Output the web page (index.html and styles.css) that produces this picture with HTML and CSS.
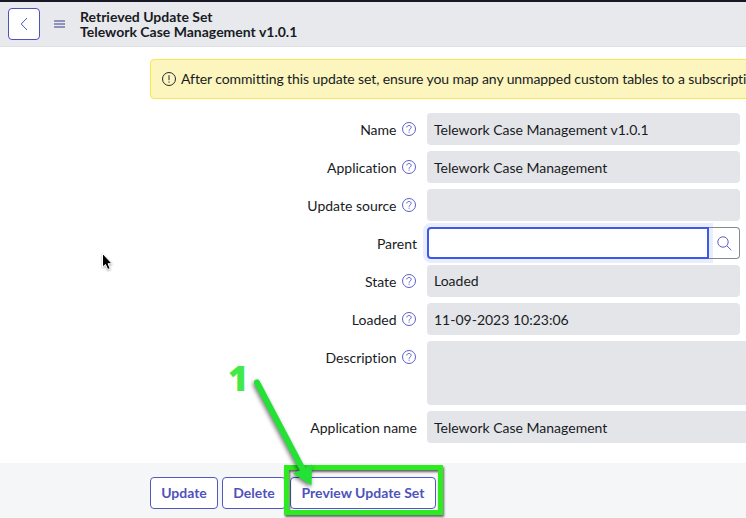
FILE: index.html
```html
<!DOCTYPE html>
<html lang="en">
<head>
<meta charset="utf-8">
<title>Retrieved Update Set</title>
<link rel="stylesheet" href="styles.css">
</head>
<body>
<svg class="defs" width="0" height="0" aria-hidden="true">
  <symbol id="help" viewBox="0 0 14 14"><circle cx="7" cy="7" r="6.5"/><path d="M4.8 5.4C4.9 4.2 5.8 3.5 7 3.5s2.2.8 2.2 1.9c0 1.6-2.1 1.6-2.1 3.3M7.1 9.7v1"/></symbol>
</svg>
<header class="header">
  <button class="back" aria-label="Back"><svg width="8" height="14" viewBox="0 0 8 14"><path d="M7 1 1.2 7 7 13"/></svg></button>
  <div class="menu"><i></i><i></i><i></i></div>
  <h1 class="title"><span class="title-type">Retrieved Update Set</span><span class="title-name">Telework Case Management v1.0.1</span></h1>
</header>
<main class="content">
  <div class="banner"><svg width="14" height="14" viewBox="0 0 14 14"><circle cx="7" cy="7" r="6.5"/><path d="M7 3.2v5M7 9.5v1.2"/></svg><span class="banner-text">After committing this update set, ensure you map any unmapped custom tables to a subscription.</span></div>
  <form class="form">
    <div class="row"><label><span>Name</span><svg class="help"><use href="#help"/></svg></label><div class="field"><span>Telework Case Management v1.0.1</span></div></div>
    <div class="row"><label><span>Application</span><svg class="help"><use href="#help"/></svg></label><div class="field"><span>Telework Case Management</span></div></div>
    <div class="row"><label><span>Update source</span><svg class="help"><use href="#help"/></svg></label><div class="field"></div></div>
    <div class="row"><label><span>Parent</span></label><div class="lookup"><div class="lookup-input"></div><div class="lookup-button"><svg width="15" height="15" viewBox="0 0 15 15"><circle cx="6" cy="6" r="5.2"/><path d="m9.8 9.8 4.5 4.4"/></svg></div></div></div>
    <div class="row"><label><span>State</span><svg class="help"><use href="#help"/></svg></label><div class="field select"><span>Loaded</span></div></div>
    <div class="row"><label><span>Loaded</span><svg class="help"><use href="#help"/></svg></label><div class="field"><span>11-09-2023 10:23:06</span></div></div>
    <div class="row tall"><label><span>Description</span><svg class="help"><use href="#help"/></svg></label><div class="field wide"></div></div>
    <div class="row"><label><span>Application name</span></label><div class="field wide"><span>Telework Case Management</span></div></div>
  </form>
</main>
<footer class="footer">
  <button class="btn update"><span>Update</span></button><button class="btn delete"><span>Delete</span></button><button class="btn preview"><span>Preview Update Set</span></button>
</footer>
<svg class="cursor" width="16" height="22" viewBox="0 0 16 22"><path class="pointer" d="M2.5 1.5v13.6l3-2.6 2.2 5 2.5-1-2.1-4.8h4z"/></svg>
<div class="highlight"></div>
<span class="step">1</span>
<svg class="arrow" width="80" height="120" viewBox="240 372 80 120"><path class="shaft" d="M257 382.500 302 468"/><path class="head" d="M293 473.500 312 464.500 311.500 485.500z"/></svg>
</body>
</html>
```
FILE: styles.css
```css
* { box-sizing: border-box; }
body {
  margin: 0;
  width: 746px;
  height: 518px;
  position: relative;
  overflow: hidden;
  display: flex;
  flex-direction: column;
  background: #fff;
  color: #181b24;
  font: 14px/20px Lato, sans-serif;
  font-variant-ligatures: none;
}
svg { fill: none; flex: none; display: block; }
.defs { position: absolute; }
.header {
  height: 47px;
  flex: none;
  display: flex;
  align-items: center;
  padding-left: 8px;
  border-top: 2px solid #181725;
  border-bottom: 1px solid #e0e1e5;
  background: #e8e9ed;
}
.back {
  width: 32px;
  height: 32px;
  padding: 0;
  display: grid;
  place-items: center;
  border: 1px solid #4f52bd;
  border-radius: 4px;
  background: #fff;
  stroke: #4f52bd;
}
.menu { width: 11px; margin: 0 15px 0 14px; display: grid; gap: 1px; }
.menu i { height: 2px; background: #9092bd; }
.title { margin: 0; font-size: 14px; line-height: 15px; font-weight: 700; white-space: nowrap; }
.title span { display: block; width: max-content; }
.content { height: 416px; flex: none; padding: 12px 0 0 150px; }
.banner {
  width: 610px;
  height: 40px;
  display: flex;
  align-items: center;
  gap: 5px;
  padding-left: 11px;
  border: 1px solid #f5e850;
  border-radius: 4px;
  background: #fcf5bd;
  white-space: nowrap;
  stroke: #252831;
}
.banner-text { stroke: none; letter-spacing: -0.1px; }
.form { margin-top: 14px; display: grid; gap: 6px; }
.row { display: grid; grid-template: 100% / 267px 1fr; column-gap: 10px; height: 32px; }
.row.tall { height: 64px; }
label { height: 34px; display: flex; align-items: center; justify-content: flex-end; gap: 5.5px; white-space: nowrap; }
.help { width: 14px; height: 14px; margin: -2px 1px 0 0; stroke: #5b5fc7; }
.field {
  width: 313px;
  display: flex;
  align-items: center;
  padding: 2px 0 0 7px;
  border-radius: 4px;
  background: #e4e5e9;
  white-space: nowrap;
}
.field.select { padding-top: 0; }
.field.wide { width: 340px; }
.lookup { width: 313px; height: 32px; display: flex; }
.lookup-input {
  width: 282px;
  border: 2px solid #3c59e7;
  border-radius: 4px 0 0 4px;
  background: #fff;
  box-shadow: 0 0 0 4px #e9edfd;
}
.lookup-button {
  width: 31px;
  display: grid;
  place-items: center;
  border: 1px solid #858995;
  border-left: 0;
  border-radius: 0 4px 4px 0;
  stroke: #5b5fc7;
}
.footer {
  flex: 1;
  display: flex;
  gap: 4px;
  padding: 14px 0 0 150px;
  background: #f5f6f8;
}
.btn {
  height: 32px;
  padding: 0;
  border: 1px solid #5457bb;
  border-radius: 4px;
  background: #fff;
  color: #4f52bd;
  font: 700 14px/20px Lato, sans-serif;
  white-space: nowrap;
}
.update { width: 68px; }
.delete { width: 64px; }
.preview { width: 146px; }
.cursor { position: absolute; left: 100px; top: 252px; filter: drop-shadow(0 1px 1px #aaa); }
.pointer { fill: #000; stroke: #fff; stroke-width: 1; }
.highlight {
  position: absolute;
  left: 284px;
  top: 465px;
  width: 159px;
  height: 50px;
  border: 5px solid #2ceb1e;
  filter: drop-shadow(1px 2px 1px #0009);
}
.step { position: absolute; left: 228px; top: 360px; font: 800 35px/36px "Open Sans", sans-serif; color: #42e94b; }
.arrow { position: absolute; left: 240px; top: 372px; filter: drop-shadow(-1px 2px 2px #0008); }
.shaft { stroke: #23e135; stroke-width: 6; stroke-linecap: round; }
.head { fill: #23e135; }
```
